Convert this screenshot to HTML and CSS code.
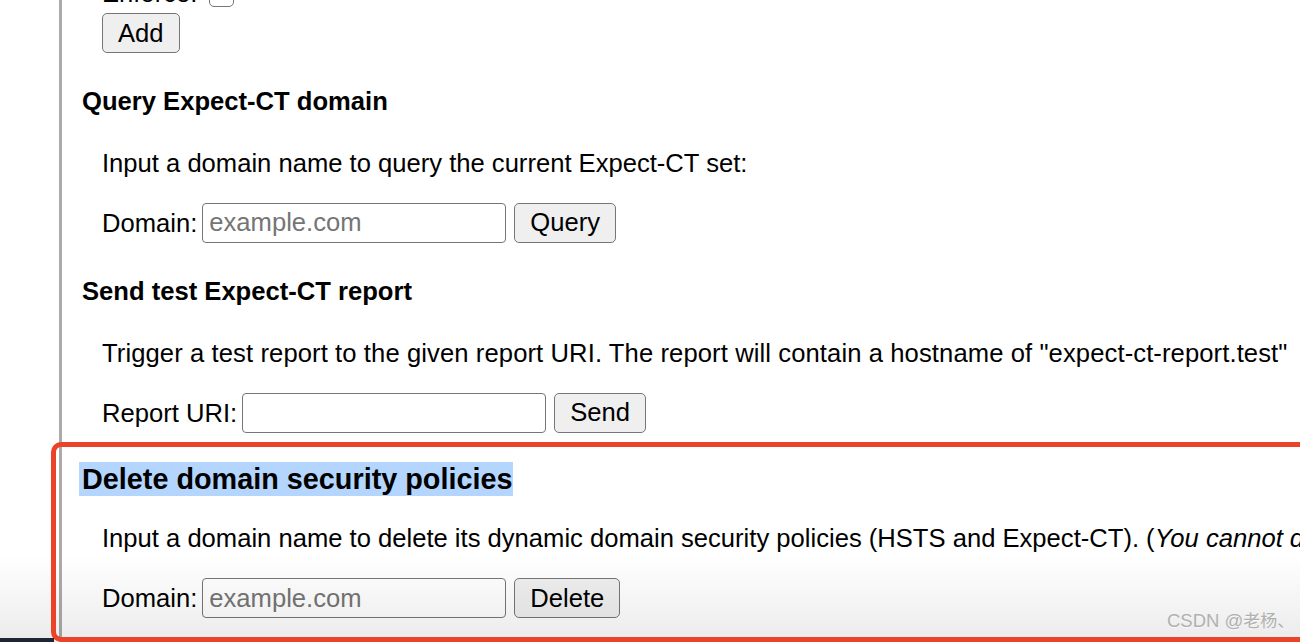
FILE: index.html
```html
<!DOCTYPE html>
<html lang="en">
<head>
    <meta charset="UTF-8">
    <meta name="viewport" content="width=device-width, initial-scale=1.0">
    <title>net-internals - Domain Security Policy</title>
    <link rel="stylesheet" href="styles.css">
</head>
<body>
    <div class="page">
        <div class="sidebar"></div>
        <div class="content">
            <div class="indent">
                <div class="enforce-row">
                    <label for="enforce">Enforce:</label>
                    <input type="checkbox" id="enforce" class="check">
                </div>
                <button type="button" class="btn">Add</button>
            </div>

            <h4 class="section-title">Query Expect-CT domain</h4>
            <div class="indent">
                <p>Input a domain name to query the current Expect-CT set:</p>
                <form class="field-row">
                    <label for="ctQueryInput">Domain:</label>
                    <input type="text" id="ctQueryInput" class="text-input" placeholder="example.com">
                    <button type="button" class="btn">Query</button>
                </form>
            </div>

            <h4 class="section-title">Send test Expect-CT report</h4>
            <div class="indent">
                <p class="wide">Trigger a test report to the given report URI. The report will contain a hostname of "expect-ct-report.test"</p>
                <form class="field-row">
                    <label for="ctReportInput">Report URI:</label>
                    <input type="text" id="ctReportInput" class="text-input">
                    <button type="button" class="btn">Send</button>
                </form>
            </div>

            <h3 class="big-title"><span class="selected">Delete domain security policies</span></h3>
            <div class="indent">
                <p>Input a domain name to delete its dynamic domain security policies (HSTS and Expect-CT). (<i>You cannot delete preloaded entries.</i>)</p>
                <form class="field-row">
                    <label for="deleteInput">Domain:</label>
                    <input type="text" id="deleteInput" class="text-input" placeholder="example.com">
                    <button type="button" class="btn">Delete</button>
                </form>
            </div>
        </div>
    </div>

    <div class="shade"></div>
    <div class="annotation"></div>
    <div class="dock-edge"></div>
    <div class="watermark">CSDN @<span class="cjk">老杨、</span></div>
</body>
</html>
```

FILE: styles.css
```css
html, body {
    margin: 0;
    height: 100%;
    overflow: hidden;
}
body {
    font-family: "Liberation Sans", Arial, sans-serif;
    font-size: 25.6px;
    line-height: 1.1;
    color: #000;
    background: #fff;
}
.page {
    display: flex;
    min-height: 100vh;
}
.sidebar {
    width: 59px;
    flex-shrink: 0;
    border-right: 3px solid #ababab;
}
.content {
    flex: 1;
    min-width: 0;
    padding-left: 20px;
    margin-top: -20px;
    white-space: nowrap;
}
.indent {
    padding-left: 20px;
}
p {
    margin: 25.6px 0;
}
.wide {
    letter-spacing: 0.1px;
}
.section-title {
    font-size: 25.6px;
    margin: 34px 0;
}
.big-title {
    font-size: 28.8px;
    margin: 28.8px 0;
    line-height: 34px;
}
.selected {
    display: inline-block;
    background: #b4d5fe;
    padding-left: 3px;
    margin-left: -3px;
}
.enforce-row {
    display: flex;
    align-items: flex-end;
    gap: 12px;
    height: 27px;
    margin-bottom: 6px;
}
.check {
    appearance: none;
    width: 25px;
    height: 25px;
    margin: 0;
    border: 1.5px solid #767676;
    border-radius: 5px;
    background: #fff;
}
.field-row {
    display: flex;
    align-items: center;
    gap: 5px;
    margin: 0;
}
.text-input {
    box-sizing: border-box;
    width: 304px;
    height: 40px;
    margin: 0;
    padding: 0 6px;
    border: 1px solid #767676;
    border-radius: 4px;
    font-family: inherit;
    font-size: 25.6px;
    background: #fff;
}
.text-input::placeholder {
    color: #757575;
}
.btn {
    box-sizing: border-box;
    height: 40px;
    margin: 0;
    padding: 0 15px;
    border: 1px solid #767676;
    border-radius: 5px;
    background: #efefef;
    font-family: inherit;
    font-size: 25.6px;
    color: #000;
}
.field-row .btn {
    margin-left: 3px;
}
.shade {
    position: absolute;
    left: 0;
    right: 0;
    top: 555px;
    bottom: 0;
    background: linear-gradient(rgba(0, 0, 0, 0), rgba(0, 0, 0, 0.08));
    pointer-events: none;
}
.annotation {
    position: absolute;
    left: 51px;
    top: 442px;
    right: -30px;
    bottom: 0;
    border: 5px solid #ea4329;
    border-radius: 10px;
    pointer-events: none;
}
.dock-edge {
    position: absolute;
    left: 0;
    bottom: 0;
    width: 54px;
    height: 4px;
    background: #1e2533;
}
.watermark {
    position: absolute;
    left: 1167px;
    top: 611px;
    font-family: "Liberation Sans", "Noto Sans CJK SC", sans-serif;
    font-size: 18.5px;
    color: #b0b0b0;
    text-shadow: 0 1px 0 rgba(255, 255, 255, 0.6);
    white-space: nowrap;
}
.cjk {
    font-size: 17px;
}
```
